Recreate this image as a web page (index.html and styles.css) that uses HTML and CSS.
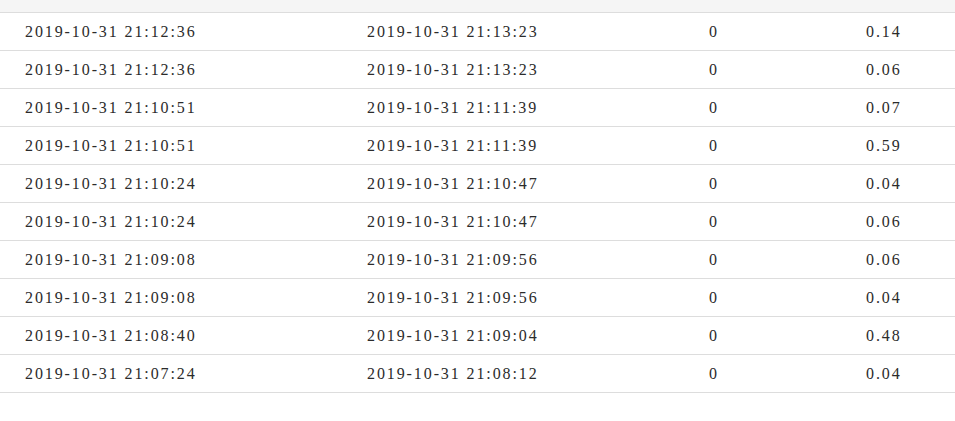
FILE: index.html
```html
<!DOCTYPE html>
<html>
<head>
<meta charset="utf-8">
<link rel="stylesheet" href="styles.css">
</head>
<body>
<div class="table">
  <div class="head"></div>
  <div class="row"><span>2019-10-31 21:12:36</span><span>2019-10-31 21:13:23</span><span>0</span><span>0.14</span></div>
  <div class="row"><span>2019-10-31 21:12:36</span><span>2019-10-31 21:13:23</span><span>0</span><span>0.06</span></div>
  <div class="row"><span>2019-10-31 21:10:51</span><span>2019-10-31 21:11:39</span><span>0</span><span>0.07</span></div>
  <div class="row"><span>2019-10-31 21:10:51</span><span>2019-10-31 21:11:39</span><span>0</span><span>0.59</span></div>
  <div class="row"><span>2019-10-31 21:10:24</span><span>2019-10-31 21:10:47</span><span>0</span><span>0.04</span></div>
  <div class="row"><span>2019-10-31 21:10:24</span><span>2019-10-31 21:10:47</span><span>0</span><span>0.06</span></div>
  <div class="row"><span>2019-10-31 21:09:08</span><span>2019-10-31 21:09:56</span><span>0</span><span>0.06</span></div>
  <div class="row"><span>2019-10-31 21:09:08</span><span>2019-10-31 21:09:56</span><span>0</span><span>0.04</span></div>
  <div class="row"><span>2019-10-31 21:08:40</span><span>2019-10-31 21:09:04</span><span>0</span><span>0.48</span></div>
  <div class="row"><span>2019-10-31 21:07:24</span><span>2019-10-31 21:08:12</span><span>0</span><span>0.04</span></div>
</div>
</body>
</html>
```
FILE: styles.css
```css
html, body {
  margin: 0;
  padding: 0;
  background: #fff;
}
.table {
  width: 955px;
  font-family: "Liberation Serif", "Noto Sans CJK SC", serif;
  font-size: 16px;
  letter-spacing: 1.9px;
  color: #2b2b2b;
}
.head {
  height: 12px;
  background: #f5f5f5;
  border-bottom: 1px solid #ddd;
}
.row {
  display: grid;
  grid-template-columns: 342px 342px 157px 114px;
  height: 37px;
  align-items: center;
  border-bottom: 1px solid #ddd;
}
.row span {
  padding-left: 25px;
  padding-top: 1px;
  white-space: nowrap;
}
```
